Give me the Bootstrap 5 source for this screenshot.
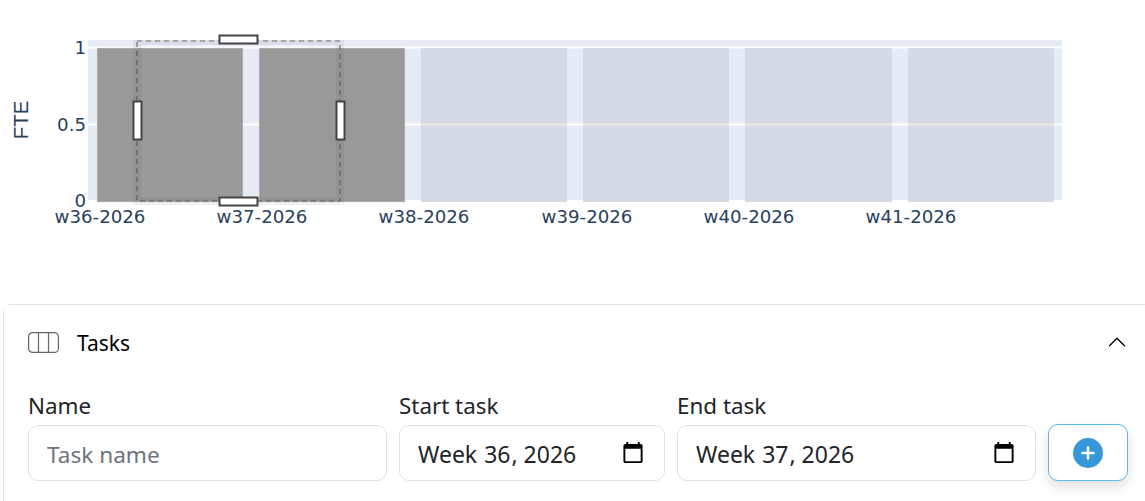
<!DOCTYPE html>
<html lang="en">
<head>
<meta charset="utf-8">
<title>Tasks</title>
<link href="https://cdn.jsdelivr.net/npm/bootstrap@5.3.0/dist/css/bootstrap.min.css" rel="stylesheet">
<style>
html,body{overflow:hidden;height:501px;background:#fff}
body{font-family:"Noto Sans","Open Sans",sans-serif;color:#212529}
.chart-box{display:block;width:1145px;height:304px}
.chart-box text{font-family:"DejaVu Sans",sans-serif;font-size:18.2px;fill:#2a3f5f}
.chart-box .axis-name{font-family:"Liberation Sans",sans-serif;font-size:20.5px}
.task-panel{margin-left:3px;width:1149px;border-radius:8px;border-color:#dee2e6}
.task-panel .accordion-item{border-radius:8px;border-color:#dee2e6}
.task-panel .accordion-button{background:#fff;color:#000;box-shadow:none;padding:25px 24px 25px;font-size:21px;line-height:28px;height:76px;border-radius:8px}
.task-panel .accordion-button:not(.collapsed)::after{filter:grayscale(1) brightness(0) contrast(2);margin-top:-2px}
.task-panel .accordion-body{padding:11px 24px 40px}
.task-icon{width:31px;height:21px;margin-right:18px;flex:none;margin-top:-2px}
.task-row{column-gap:12px}
.field-name{width:359px;flex:none}
.field-date-a{width:266px;flex:none}
.field-date-b{width:359px;flex:none}
.field-label{font-size:22.4px;line-height:28px;margin-bottom:5px;display:block}
.field-input{height:56px;font-size:23px;border-radius:10px;padding:2px 18px 0;border-color:#dee2e6;color:#212529}
.field-input::placeholder{color:#6c757d;font-size:22.6px}
.field-input::-webkit-calendar-picker-indicator{width:24px;height:24px;margin-right:1px;padding:0;margin-top:-3px}
.add-btn{width:80px;height:57px;flex:none;background:#fff;border:1px solid #5ab9ee;border-radius:10px;box-shadow:0 6px 12px rgba(0,0,0,.12);padding:0}
</style>
</head>
<body>
<svg class="chart-box" viewBox="0 0 1145 304" role="img" aria-label="FTE per week">
  <defs><clipPath id="plot-clip"><rect x="88" y="40" width="974" height="165"/></clipPath></defs>
  <rect x="88" y="40" width="974" height="161" fill="#e5ecf6"/>
  <g stroke="#fff" stroke-width="2"><path d="M88 47.5H1062M88 124.5H1062M88 201H1062"/></g>
  <g fill="#999" stroke="#e5e5e5" stroke-opacity=".5">
    <rect x="97" y="48" width="146" height="154"/>
    <rect x="259" y="48" width="146" height="154"/>
  </g>
  <g fill="#d5dbe4">
    <rect x="421" y="48" width="146" height="154"/>
    <rect x="583" y="48" width="146" height="154"/>
    <rect x="745" y="48" width="147" height="154"/>
    <rect x="908" y="48" width="146" height="154"/>
  </g>
  <path d="M421 124.5H567M583 124.5H729M745 124.5H892M908 124.5H1054" stroke="#e8e8e8" stroke-width="2"/>
  <g clip-path="url(#plot-clip)">
    <rect x="137" y="41" width="203" height="160" fill="none" stroke="#444" stroke-opacity=".08" stroke-width="8"/>
  </g>
  <rect x="137" y="41" width="203" height="160" fill="none" stroke="#555" stroke-opacity=".8" stroke-width="1.2" stroke-dasharray="5 4"/>
  <g fill="#fff" stroke="#444" stroke-width="2">
    <rect x="219.5" y="35.5" width="38" height="8"/>
    <rect x="219.5" y="197.5" width="38" height="8"/>
    <rect x="133.5" y="101.5" width="8" height="38"/>
    <rect x="336.5" y="101.5" width="8" height="38"/>
  </g>
  <g text-anchor="end">
    <text x="86" y="54">1</text>
    <text x="86" y="131">0.5</text>
    <text x="86" y="207">0</text>
  </g>
  <g text-anchor="middle">
    <text x="100" y="222.5">w36-2026</text>
    <text x="262" y="222.5">w37-2026</text>
    <text x="424" y="222.5">w38-2026</text>
    <text x="587" y="222.5">w39-2026</text>
    <text x="749" y="222.5">w40-2026</text>
    <text x="911" y="222.5">w41-2026</text>
  </g>
  <text class="axis-name" transform="translate(28 120) rotate(-90)" text-anchor="middle">FTE</text>
</svg>

<div class="accordion task-panel">
  <div class="accordion-item">
    <h2 class="accordion-header">
      <button class="accordion-button" type="button" data-bs-toggle="collapse" data-bs-target="#task-body" aria-expanded="true">
        <svg class="task-icon" viewBox="0 0 31 21" fill="none" stroke="#666" stroke-width="1.2"><rect x=".6" y=".6" width="29.8" height="19.8" rx="4"/><path d="M10.5 .6V20.4M20.5 .6V20.4"/></svg>
        Tasks
      </button>
    </h2>
    <div id="task-body" class="accordion-collapse collapse show">
      <div class="accordion-body">
        <form class="d-flex align-items-end task-row">
          <div class="field-name">
            <label class="field-label" for="n">Name</label>
            <input id="n" class="form-control field-input" type="text" placeholder="Task name">
          </div>
          <div class="field-date-a">
            <label class="field-label" for="s">Start task</label>
            <input id="s" class="form-control field-input" type="week" value="2026-W36">
          </div>
          <div class="field-date-b">
            <label class="field-label" for="e">End task</label>
            <input id="e" class="form-control field-input" type="week" value="2026-W37">
          </div>
          <button class="add-btn d-flex align-items-center justify-content-center" type="button" aria-label="Add task">
            <svg width="30" height="30" viewBox="0 0 30 30"><circle cx="15" cy="15" r="15" fill="#3498db"/><path d="M15 9.5V20.5M9.5 15H20.5" stroke="#fff" stroke-width="2.6" stroke-linecap="round"/></svg>
          </button>
        </form>
      </div>
    </div>
  </div>
</div>
<script src="https://cdn.jsdelivr.net/npm/bootstrap@5.3.0/dist/js/bootstrap.bundle.min.js"></script>
</body>
</html>
